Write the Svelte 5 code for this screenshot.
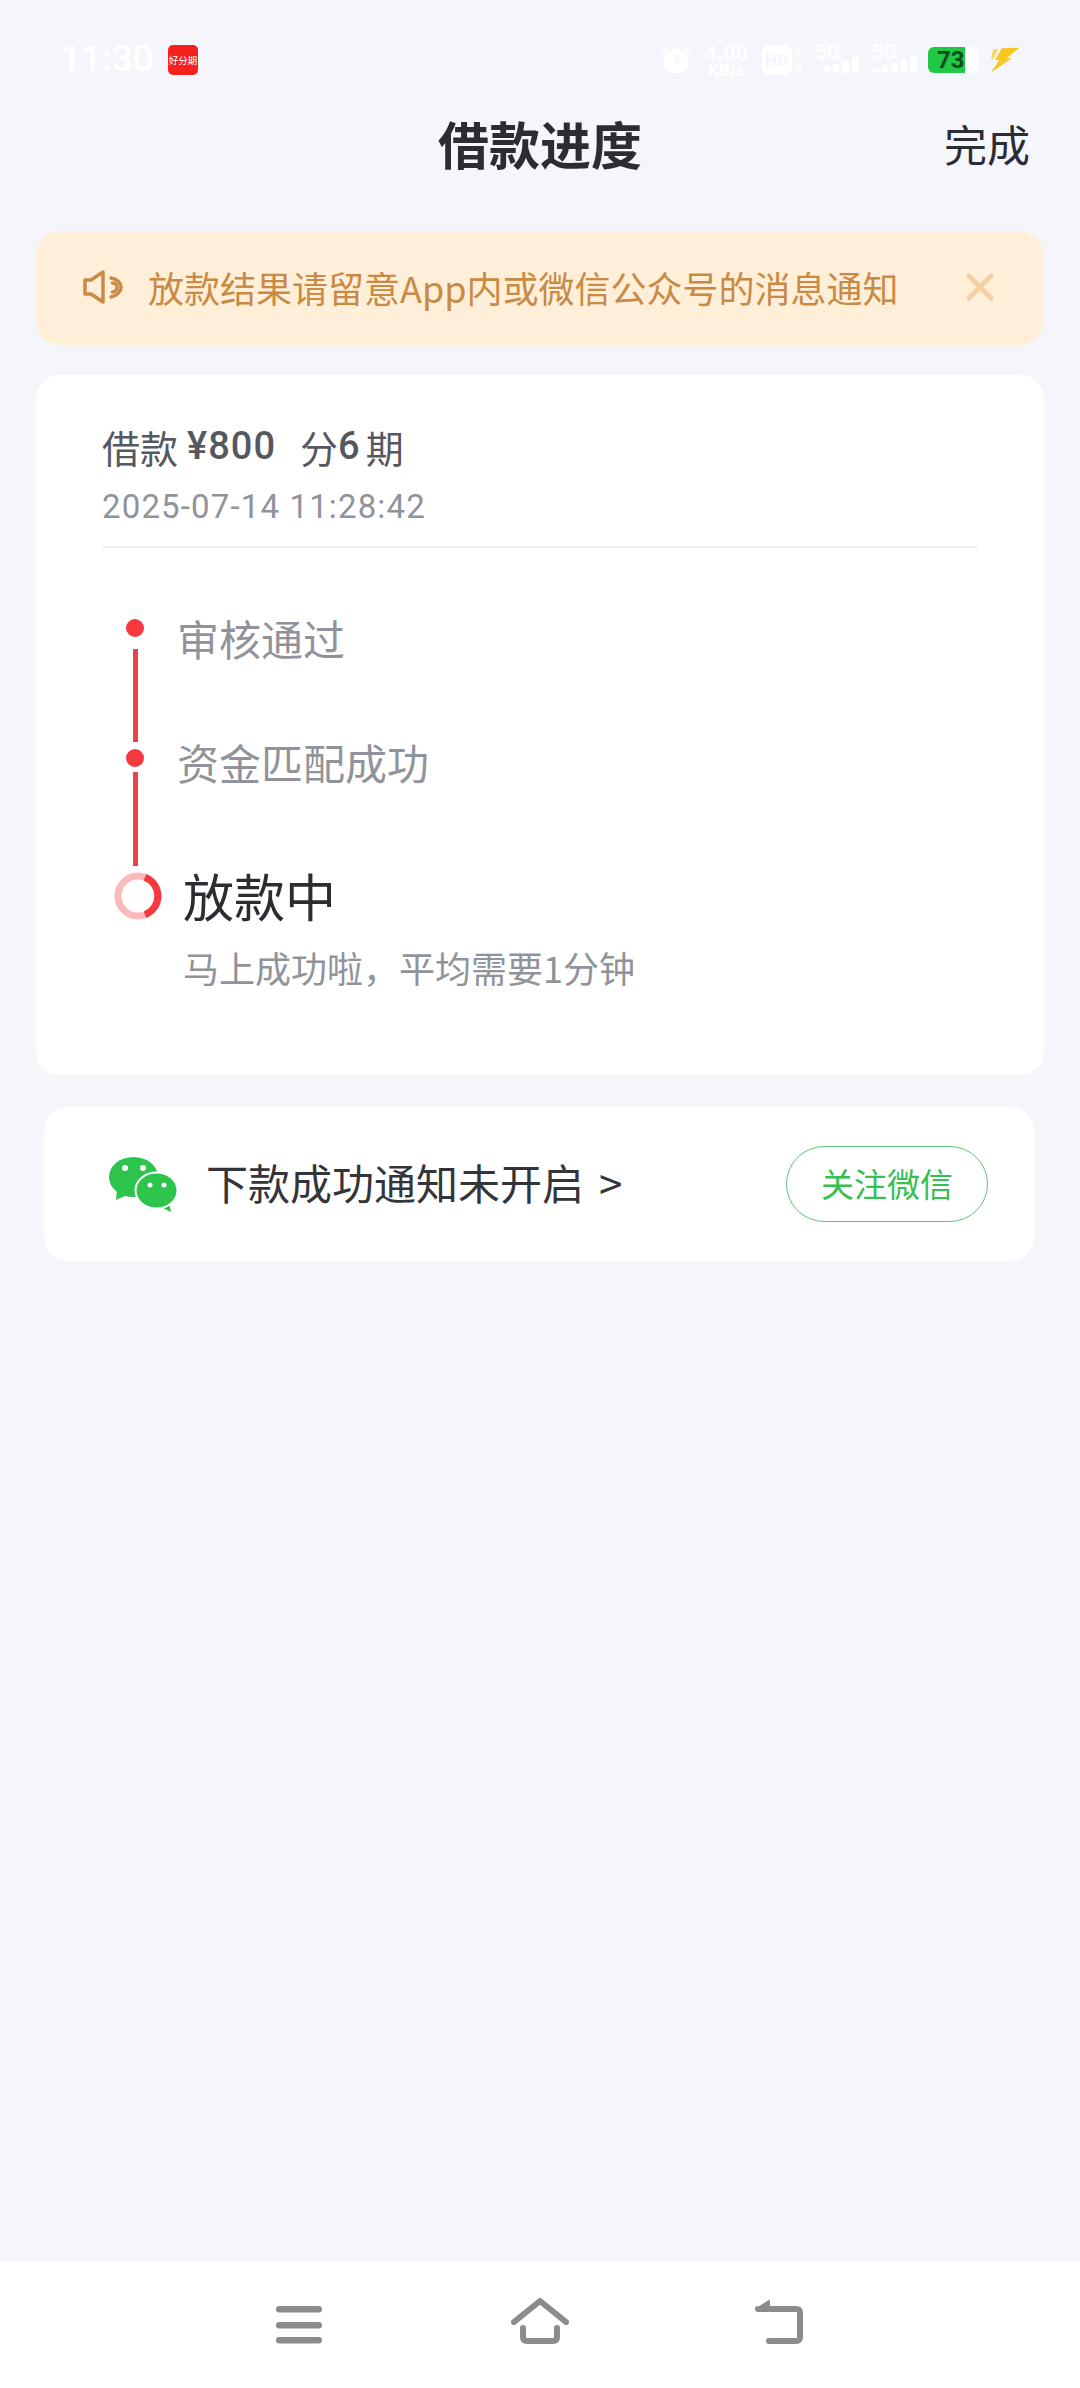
<script>
  const steps = [
    { label: '审核通过' },
    { label: '资金匹配成功' }
  ];
</script>

<div class="page">
  <div class="status">
    <span class="time">11:30</span>
    <span class="app-badge">好分期</span>
    <div class="status-right">
      <svg class="alarm" width="28" height="28" viewBox="0 0 28 28">
        <circle cx="14" cy="15" r="12.5" fill="#fff" />
        <path d="M1 6l5-4M27 6l-5-4" stroke="#fff" stroke-width="2" />
        <path d="M14 9v7h5" stroke="#f4f6fb" stroke-width="2" fill="none" />
      </svg>
      <div class="speed"><span>4.00</span><span>KB/s</span></div>
      <span class="hd">HD</span>
      <div class="sim"><span>1</span><span>2</span></div>
      <svg class="signal" width="46" height="36" viewBox="0 -6 46 36">
        <text x="0" y="15" class="sig-text">5G</text>
        <g fill="#fff">
          <rect x="9" y="22" width="6" height="7" rx="1" />
          <rect x="18" y="20" width="6" height="9" rx="1" />
          <rect x="27" y="17" width="7" height="12" rx="1" />
          <rect x="37" y="13" width="7" height="16" rx="1" />
        </g>
      </svg>
      <svg class="signal second" width="46" height="36" viewBox="0 -6 46 36">
        <text x="0" y="15" class="sig-text">5G</text>
        <g fill="#fff">
          <rect x="0" y="24" width="7" height="4" rx="1" />
          <rect x="10" y="21" width="6" height="8" rx="1" />
          <rect x="20" y="19" width="6" height="10" rx="1" />
          <rect x="29" y="16" width="6" height="13" rx="1" />
          <rect x="38" y="12" width="7" height="17" rx="1" />
        </g>
      </svg>
      <div class="battery"><span class="battery-fill">73</span></div>
      <svg class="bolt" width="30" height="27" viewBox="0 0 30 27">
        <path d="M3.300 2.300h5L3.300 12.300H1z" fill="#f9d65a" />
        <path d="M11.700 1.300L29.300 0.700 16.700 11.300h5L0.700 25.700 9.300 13H5z" fill="#f7c61f" />
      </svg>
    </div>
  </div>

  <header class="header">
    <span></span>
    <h1>借款进度</h1>
    <span class="done">完成</span>
  </header>

  <div class="banner">
    <svg class="speaker" width="42" height="34" viewBox="0 0 42 34" fill="none" stroke="#c98a45" stroke-width="3.500" stroke-linejoin="round" stroke-linecap="round">
      <path d="M2 10h6L20 2v30L8 24H2z" />
      <path d="M28 8c6 1 10 5 10 9s-4 9-10 10" />
      <path d="M29.500 13c3 0 4.500 2 4.500 4s-1.500 5-4.500 5" />
    </svg>
    <span class="banner-text">放款结果请留意App内或微信公众号的消息通知</span>
    <svg class="close" width="30" height="30" viewBox="0 0 30 30" stroke="#f6cfa4" stroke-width="5" stroke-linecap="round">
      <path d="M4 4l22 22M26 4L4 26" />
    </svg>
  </div>

  <section class="card">
    <div class="loan">
      <span class="cjk">借款</span><span class="num amount">¥800</span><span class="cjk split">分</span><span class="num six">6</span><span class="cjk">期</span>
    </div>
    <div class="date">2025-07-14 11:28:42</div>
    <div class="divider"></div>

    <div class="timeline">
      <div class="rail">
        <i class="dot"></i>
        <i class="line first"></i>
        <i class="dot"></i>
        <i class="line second"></i>
        <svg class="ring" width="48" height="48" viewBox="0 0 48 48" fill="none" stroke-width="7">
          <circle cx="24" cy="24" r="20" stroke="#fcb9bb" />
          <path d="M31 5.300a20 20 0 0 1 0 37.400" stroke="#f7383e" />
        </svg>
      </div>
      <div class="labels">
        {#each steps as step}
          <div class="step">{step.label}</div>
        {/each}
        <div class="current">放款中</div>
        <div class="sub">马上成功啦，平均需要1分钟</div>
      </div>
    </div>
  </section>

  <section class="notify">
    <svg class="wechat" width="70" height="58" viewBox="0 0 70 58">
      <path d="M8 35L7 45l11-5z" fill="#2dc44c" />
      <ellipse cx="24.500" cy="22" rx="24.500" ry="20" fill="#2dc44c" />
      <circle cx="16" cy="13" r="3" fill="#fff" />
      <circle cx="34" cy="13" r="3" fill="#fff" />
      <path d="M60 47l2 10-11-5z" fill="#2dc44c" />
      <ellipse cx="47.500" cy="35.500" rx="21" ry="18" fill="#2dc44c" stroke="#fff" stroke-width="2" />
      <circle cx="41" cy="30" r="2.500" fill="#fff" />
      <circle cx="55" cy="30" r="2.500" fill="#fff" />
    </svg>
    <span class="notify-text">下款成功通知未开启<span class="chevron">&gt;</span></span>
    <span class="follow">关注微信</span>
  </section>

  <nav class="nav">
    <svg width="46" height="38" viewBox="0 0 46 38" fill="#8c8c8c">
      <rect y="0" width="46" height="6.500" rx="3.250" />
      <rect y="16" width="46" height="6.500" rx="3.250" />
      <rect y="31" width="46" height="6.500" rx="3.250" />
    </svg>
    <svg class="home" width="58" height="46" viewBox="0 0 58 46" fill="none" stroke="#8c8c8c" stroke-width="6" stroke-linecap="round" stroke-linejoin="round">
      <path d="M3 24L29 3l26 21" />
      <path d="M12 30v9c0 3 1 4 4 4h26c3 0 4-1 4-4v-9" />
    </svg>
    <svg width="50" height="46" viewBox="0 0 50 46" fill="none" stroke="#8c8c8c" stroke-width="6" stroke-linecap="round" stroke-linejoin="round">
      <path d="M4 11h38c3 0 4 1 4 4v24c0 3-1 4-4 4H15" />
      <path d="M4 10l11-7v10z" fill="#8c8c8c" stroke-width="2" />
    </svg>
  </nav>
</div>

<style>
  :global(body) {
    margin: 0;
    background: #f4f6fb;
  }

  .page {
    display: flex;
    flex-direction: column;
    height: 2388px;
    overflow: hidden;
    background: #f4f6fb;
    font-family: "Noto Sans CJK SC", "Noto Sans", sans-serif;
  }

  /* status bar, mostly white on the pale page */
  .status {
    display: flex;
    align-items: center;
    height: 32px;
    padding: 44px 60px 14px 60px;
    color: #fff;
  }

  .time {
    width: 108px;
    margin-top: -3px;
    font-family: Roboto, sans-serif;
    font-size: 37px;
    font-weight: 500;
  }

  .app-badge {
    width: 30px;
    height: 30px;
    border-radius: 5px;
    background: #f5211f;
    font-size: 9.500px;
    line-height: 30px;
    text-align: center;
    white-space: nowrap;
  }

  .status-right {
    display: flex;
    align-items: center;
    margin-left: auto;
    height: 32px;
  }

  .speed {
    display: flex;
    flex-direction: column;
    align-items: center;
    margin-left: 14px;
    font-family: Roboto, sans-serif;
    font-weight: 700;
    font-size: 17px;
    line-height: 14px;
  }

  .speed span:first-child {
    font-size: 21px;
    line-height: 20px;
    letter-spacing: 0.500px;
  }

  .hd {
    width: 30px;
    height: 30px;
    margin-left: 13px;
    border-radius: 7px;
    background: #fff;
    color: #f4f6fb;
    font-family: Roboto, sans-serif;
    font-size: 17px;
    font-weight: 700;
    line-height: 30px;
    text-align: center;
  }

  .sim {
    display: flex;
    flex-direction: column;
    margin-left: 3px;
    font-family: Roboto, sans-serif;
    font-size: 13px;
    font-weight: 700;
    line-height: 15px;
  }

  .signal {
    margin-left: 13px;
    margin-top: -8px;
  }

  .signal.second {
    margin-left: 11px;
  }

  .sig-text {
    font-family: Roboto, sans-serif;
    font-size: 20px;
    font-weight: 700;
    fill: #fff;
  }

  .battery {
    width: 50px;
    height: 26px;
    margin-left: 10px;
    border-radius: 6px;
    background: #fff;
    overflow: hidden;
  }

  .battery-fill {
    display: block;
    width: 37px;
    height: 26px;
    box-sizing: border-box;
    padding-left: 9px;
    background: #22c744;
    color: #064f1e;
    font-family: Roboto, sans-serif;
    font-size: 24px;
    font-weight: 700;
    line-height: 26px;
    white-space: nowrap;
  }

  .bolt {
    margin-left: 12px;
  }

  /* title row */
  .header {
    display: grid;
    grid-template-columns: 1fr auto 1fr;
    align-items: center;
    box-sizing: border-box;
    height: 112px;
    padding: 0 50px 6px 0;
    color: #2b2d33;
  }

  .header h1 {
    margin: 0 0 0 50px;
    font-size: 51px;
    font-weight: 700;
    line-height: 60px;
  }

  .done {
    justify-self: end;
    font-size: 43px;
    line-height: 60px;
  }

  .banner {
    display: flex;
    align-items: center;
    box-sizing: border-box;
    height: 114px;
    margin: 29px 36px 0;
    padding: 0 28px 2px 47px;
    border-radius: 24px;
    background: #ffefd9;
  }

  .banner-text {
    margin-left: 23px;
    color: #c98a45;
    font-size: 36px;
    white-space: nowrap;
  }

  .close {
    margin-left: auto;
    margin-right: 21px;
  }

  .card {
    height: 700px;
    box-sizing: border-box;
    margin: 30px 36px 0;
    padding: 44px 66px 0;
    border-radius: 24px;
    background: #fff;
  }

  .loan {
    display: flex;
    align-items: center;
    height: 54px;
    color: #55585e;
    font-size: 38px;
  }

  .num {
    font-family: Roboto, sans-serif;
    font-weight: 500;
  }

  .amount {
    margin-left: 9px;
    letter-spacing: 1px;
  }

  .split {
    margin-left: 24px;
  }

  .six {
    margin: 0 6px 0 0;
  }

  .date {
    margin-top: 14px;
    color: #909399;
    font-family: Roboto, sans-serif;
    font-size: 33px;
    line-height: 40px;
    letter-spacing: 1.150px;
  }

  .divider {
    height: 2px;
    margin-top: 19px;
    background: #eeeff1;
  }

  .timeline {
    display: flex;
    margin-top: 71px;
    margin-left: 12px;
  }

  .rail {
    display: flex;
    flex-direction: column;
    align-items: center;
    width: 48px;
  }

  .dot {
    display: block;
    flex: none;
    width: 18px;
    height: 18px;
    margin-left: -6px;
    border-radius: 50%;
    background: #f7383e;
  }

  .line {
    display: block;
    flex: none;
    width: 5px;
    margin-left: -6px;
    background: #e8454a;
  }

  .line.first {
    height: 93px;
    margin-top: 12px;
    margin-bottom: 7px;
  }

  .line.second {
    height: 94px;
    margin-top: 5px;
    margin-bottom: 6px;
  }

  .ring {
    flex: none;
  }

  .labels {
    margin-top: -2px;
    margin-left: 20px;
  }

  .step {
    height: 42px;
    margin-left: -5px;
    color: #909399;
    font-size: 42px;
    line-height: 42px;
    white-space: nowrap;
  }

  .step + .step {
    margin-top: 82px;
  }

  .current {
    margin-top: 84px;
    margin-left: 1px;
    color: #2b2d33;
    font-size: 51px;
    line-height: 56px;
  }

  .sub {
    margin-top: 19px;
    margin-left: 1px;
    color: #909399;
    font-size: 36px;
    line-height: 50px;
    white-space: nowrap;
  }

  .notify {
    display: flex;
    align-items: center;
    height: 154px;
    margin: 32px 46px 0 44px;
    padding: 0 46px 0 65px;
    border-radius: 24px;
    background: #fff;
  }

  .notify-text {
    margin-left: 27px;
    margin-bottom: 5px;
    color: #33353a;
    font-size: 42px;
    white-space: nowrap;
  }

  .chevron {
    margin-left: 15px;
  }

  .follow {
    margin-left: auto;
    width: 200px;
    height: 74px;
    border: 1px solid #5fc27a;
    border-radius: 38px;
    color: #35c052;
    font-size: 33px;
    line-height: 72px;
    text-align: center;
  }

  .nav {
    display: flex;
    align-items: flex-end;
    justify-content: center;
    gap: 187px;
    height: 82px;
    margin-top: auto;
    padding-bottom: 44px;
    background: #fff;
  }

  .home {
    margin: 0 -2px 0 2px;
  }
</style>
